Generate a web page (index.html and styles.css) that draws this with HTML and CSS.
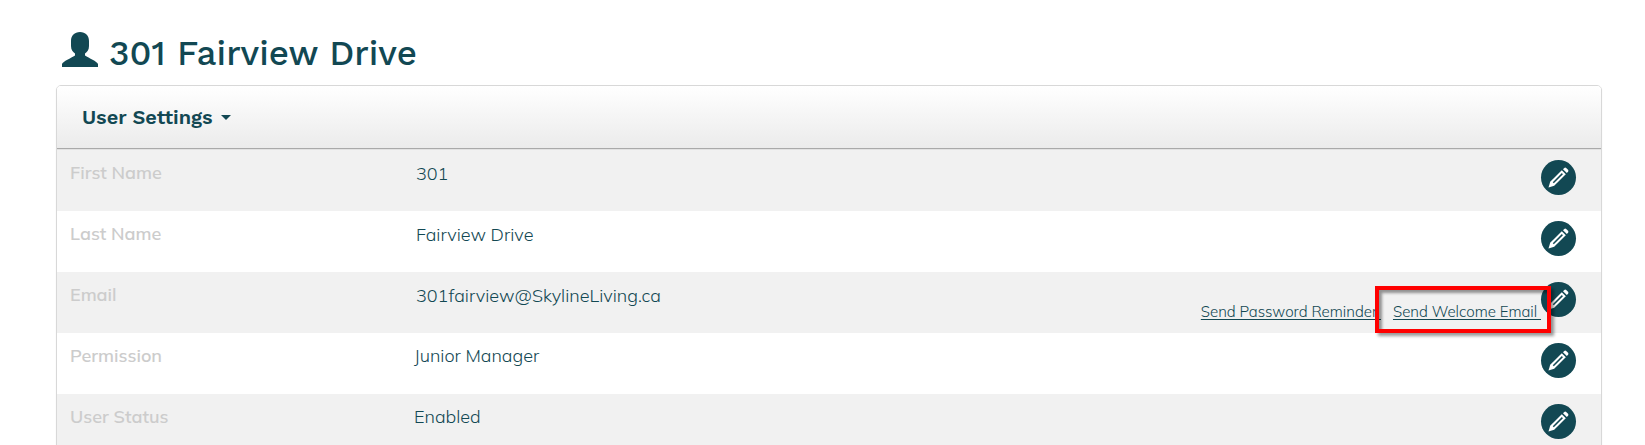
FILE: index.html
```html
<!DOCTYPE html>
<html lang="en">
<head>
<meta charset="utf-8">
<meta name="viewport" content="width=device-width, initial-scale=1">
<title>301 Fairview Drive</title>
<link rel="stylesheet" href="styles.css">
</head>
<body>
<svg class="defs" aria-hidden="true">
  <symbol id="pencil" viewBox="0 0 35 35">
    <path d="M7.5 27.5 9.2 21.8 20.8 10.2 24.8 14.2 13.2 25.8Z" fill="#fff"/>
    <path d="M12.3 22.7 21.4 13.6" stroke="#124853" stroke-width="1.5"/>
    <path d="M22 9.2 23.3 7.9Q24.2 7.2 25.2 8L27 9.8Q27.8 10.8 27.1 11.7L25.8 13Z" fill="#fff"/>
  </symbol>
</svg>
<main class="page">
  <h1 class="title">
    <svg class="user-icon" viewBox="0 0 36 35" aria-hidden="true"><path d="M18 0C23.500 0 27 3.500 27 9V14C27 18 25 20 23 21.500V23.500C27 26 35 29.500 36 32V35H0V32C1 29.500 9 26 13 23.500V21.500C11 20 9 18 9 14V9C9 3.500 12.500 0 18 0Z" fill="#124853"/></svg>
    <span>301 Fairview Drive</span>
  </h1>
  <section class="panel">
    <h2 class="panel-head"><button class="menu" type="button">User Settings <span class="caret"></span></button></h2>
    <dl class="rows">
      <div class="row">
        <dt class="label">First Name</dt>
        <dd class="value editable">301</dd>
        <dd class="actions"><button class="edit" type="button" aria-label="Edit first name"><svg class="pencil"><use href="#pencil"/></svg></button></dd>
      </div>
      <div class="row">
        <dt class="label">Last Name</dt>
        <dd class="value editable">Fairview Drive</dd>
        <dd class="actions"><button class="edit" type="button" aria-label="Edit last name"><svg class="pencil"><use href="#pencil"/></svg></button></dd>
      </div>
      <div class="row">
        <dt class="label">Email</dt>
        <dd class="value editable">301fairview@SkylineLiving.ca</dd>
        <dd class="actions">
          <a class="link" href="#">Send Password Reminder </a>
          <a class="link marked" href="#">Send Welcome Email </a>
          <button class="edit" type="button" aria-label="Edit email"><svg class="pencil"><use href="#pencil"/></svg></button>
        </dd>
      </div>
      <div class="row">
        <dt class="label">Permission</dt>
        <dd class="value">Junior Manager</dd>
        <dd class="actions"><button class="edit" type="button" aria-label="Edit permission"><svg class="pencil"><use href="#pencil"/></svg></button></dd>
      </div>
      <div class="row">
        <dt class="label">User Status</dt>
        <dd class="value">Enabled</dd>
        <dd class="actions"><button class="edit" type="button" aria-label="Edit user status"><svg class="pencil"><use href="#pencil"/></svg></button></dd>
      </div>
    </dl>
  </section>
</main>
</body>
</html>
```
FILE: styles.css
```css
* { box-sizing: border-box; }
html { overflow: hidden; }
body {
  margin: 0;
  background: #fff;
  color: #124853;
  font-family: Mulish, Lato, sans-serif;
  font-size: 18px;
  line-height: 24px;
}
.defs { position: absolute; width: 0; height: 0; }
.page { padding: 32px 43px 0 56px; }
.title {
  display: flex;
  gap: 11px;
  margin: 0 0 10px;
  padding-left: 6px;
  font: 500 35px/43px "Work Sans", Inter, sans-serif;
}
.user-icon { width: 36px; height: 35px; }
.panel {
  border: 1px solid #d8d8d8;
  border-radius: 5px;
  box-shadow: 0 1px 2px rgba(0, 0, 0, .06);
}
.panel-head {
  margin: 0;
  padding: 17px 25px 16px;
  border-bottom: 1px solid #a9a9a9;
  border-radius: 4px 4px 0 0;
  background: linear-gradient(#fff, #ebebeb);
  line-height: 0;
}
.menu {
  display: inline-flex;
  align-items: center;
  gap: 8px;
  padding: 0;
  border: 0;
  background: none;
  color: inherit;
  font: 600 20px/29px "Work Sans", Inter, sans-serif;
}
.caret {
  border: 5px solid transparent;
  border-top-color: currentColor;
  border-bottom: 0;
}
.rows { margin: 0; padding-top: 1px; background: #e2e2e2; }
.row {
  display: grid;
  grid-template-columns: 344px 1fr auto;
  height: 61px;
  padding: 10px 25px 0 13px;
  background: #fff;
}
.row:nth-child(odd) { background: #f1f1f1; }
.label { padding-top: 1px; color: #ccc; font-weight: 600; }
.value { margin: 0; padding-top: 1px; font-weight: 350; }
.editable { padding: 2px 0 0 2px; }
.actions { display: flex; margin: 0; }
.link {
  position: relative;
  margin: 20px 0 0 12px;
  height: 20px;
  color: inherit;
  font-size: 15px;
  font-weight: 350;
  line-height: 20px;
  text-underline-offset: 2px;
  white-space: pre;
}
.marked::after {
  content: "";
  position: absolute;
  z-index: 1;
  inset: -16px -10px -11px -18px;
  border: 4px solid #f00;
  box-shadow: 3px 3px 3px rgba(0, 0, 0, .4), inset 3px 3px 3px rgba(0, 0, 0, .4);
  pointer-events: none;
}
.edit {
  width: 35px;
  height: 35px;
  padding: 0;
  border: 0;
  border-radius: 50%;
  background: #124853;
}
.pencil { display: block; width: 35px; height: 35px; }
```
